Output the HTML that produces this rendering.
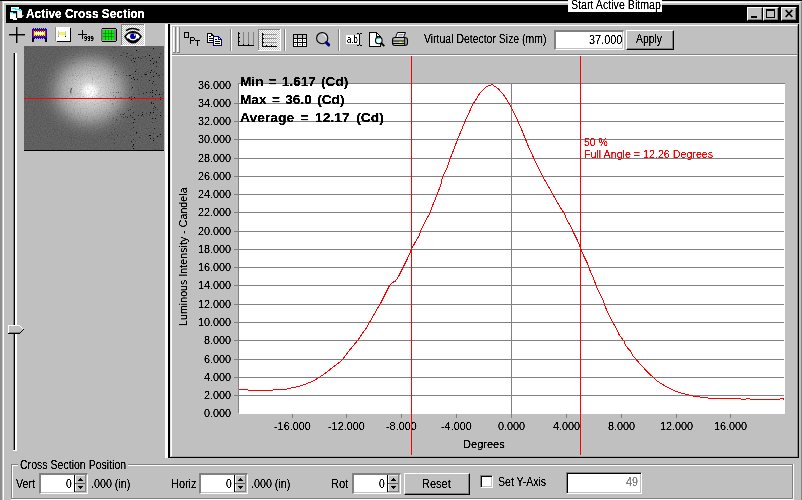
<!DOCTYPE html>
<html><head><meta charset="utf-8"><title>Active Cross Section</title>
<style>
html,body{margin:0;padding:0;}
body{width:802px;height:500px;overflow:hidden;background:#c0c0c0;position:relative;font-family:"Liberation Sans",sans-serif;font-size:12px;color:#000;line-height:1;}
.a{position:absolute;display:block;}
.t,.tb{position:absolute;white-space:pre;transform-origin:0 0;filter:url(#crisp);}
.tb{filter:url(#crispb);}
.btn{position:absolute;background:#c0c0c0;box-sizing:border-box;border:1px solid;border-color:#fff #000 #000 #fff;box-shadow:inset -1px -1px 0 #808080;}
.sunk{position:absolute;background:#fff;box-sizing:border-box;border:1px solid;border-color:#808080 #fff #fff #808080;box-shadow:inset 1px 1px 0 #000, inset -1px -1px 0 #c0c0c0;}
svg{position:absolute;overflow:visible;}
</style></head><body>
<svg width="0" height="0" style="left:0;top:0"><defs>
<filter id="crisp" x="-5%" y="-5%" width="110%" height="110%" color-interpolation-filters="sRGB"><feComponentTransfer><feFuncA type="linear" slope="3" intercept="-0.72"/></feComponentTransfer></filter>
<filter id="crispb" x="-5%" y="-5%" width="110%" height="110%" color-interpolation-filters="sRGB"><feComponentTransfer><feFuncA type="linear" slope="3" intercept="-0.62"/></feComponentTransfer></filter>
<pattern id="dz" width="2" height="2" patternUnits="userSpaceOnUse"><rect width="2" height="2" fill="#c0c0c0"/><rect width="1" height="1" fill="#fff"/><rect x="1" y="1" width="1" height="1" fill="#fff"/></pattern>
</defs></svg>

<div class="a" style="left:0px;top:0px;width:802px;height:1px;background:#000;"></div>
<div class="a" style="left:0px;top:1px;width:2px;height:499px;background:#8c8c8c;"></div>
<div class="a" style="left:2px;top:1px;width:799px;height:1px;background:#dfdfdf;"></div>
<div class="a" style="left:2px;top:2px;width:1px;height:498px;background:#c8c8c8;"></div>
<div class="a" style="left:3px;top:2px;width:797px;height:1px;background:#fff;"></div>
<div class="a" style="left:3px;top:2px;width:1px;height:498px;background:#fff;"></div>
<div class="a" style="left:801px;top:2px;width:1px;height:498px;background:#868686;"></div>
<div class="a" style="left:6px;top:5px;width:793px;height:18px;background:#000;"></div>
<div class="tb" style="left:25.7px;top:6px;font-size:12px;line-height:16px;height:16px;font-weight:bold;color:#fff;transform:scaleX(0.9890)">Active Cross Section</div>
<svg style="left:8px;top:6px" width="16" height="16" viewBox="0 0 16 16" shape-rendering="crispEdges">
<rect x="3" y="1" width="8" height="4" fill="#fff"/><rect x="9" y="3" width="4" height="2" fill="#fff"/>
<rect x="4" y="2" width="4" height="1" fill="#0ff"/><rect x="7" y="3" width="5" height="1" fill="#0ff"/><rect x="11" y="4" width="3" height="1" fill="#0ff"/>
<rect x="9" y="5" width="5" height="7" fill="#f4f4f4"/><rect x="9" y="5" width="1" height="7" fill="#d0d0d0"/><rect x="14" y="9" width="1" height="2" fill="#b0b0b0"/><rect x="15" y="9" width="1" height="1" fill="#808080"/>
<rect x="2" y="6" width="3" height="1" fill="#0ff"/><rect x="5" y="7" width="3" height="1" fill="#0ff"/>
<rect x="2" y="8" width="6" height="5" fill="#fff"/><rect x="2" y="7" width="3" height="1" fill="#fff"/><rect x="5" y="12" width="4" height="2" fill="#fff"/>
</svg>
<div class="btn" style="left:747px;top:7px;width:16px;height:14px"></div>
<div class="btn" style="left:763px;top:7px;width:16px;height:14px"></div>
<div class="btn" style="left:781px;top:7px;width:16px;height:14px"></div>
<div class="a" style="left:751px;top:16px;width:6px;height:2px;background:#000;"></div>
<div class="a" style="left:766px;top:9px;width:9px;height:9px;box-sizing:border-box;border:1px solid #000;border-top-width:2px"></div>
<svg style="left:785px;top:10px" width="8" height="7" viewBox="0 0 8 7"><path d="M0.7 0 L7.3 7 M7.3 0 L0.7 7" stroke="#000" stroke-width="1.7" fill="none"/></svg>
<div class="a" style="left:568px;top:0px;width:94px;height:12px;background:#fff;"></div>
<div class="t" style="left:570.52px;top:-3px;font-size:12.5px;line-height:16px;height:16px;transform:scaleX(0.8514)">Start Active Bitmap</div>
<div class="a" style="left:9px;top:34px;width:16px;height:1px;background:#000;"></div>
<div class="a" style="left:16px;top:27px;width:1px;height:16px;background:#000;"></div>
<div class="a" style="left:9px;top:35px;width:16px;height:1px;background:#000;opacity:.45"></div>
<div class="a" style="left:17px;top:27px;width:1px;height:16px;background:#000;opacity:.45"></div>
<svg style="left:32px;top:28px" width="15" height="14" viewBox="0 0 15 14" shape-rendering="crispEdges">
<rect x="0" y="1" width="15" height="9" fill="#0000ff"/>
<g fill="#0000ff"><rect x="1" y="0" width="1" height="1"/><rect x="3" y="0" width="1" height="1"/><rect x="5" y="0" width="1" height="1"/><rect x="7" y="0" width="1" height="1"/><rect x="9" y="0" width="1" height="1"/><rect x="11" y="0" width="1" height="1"/><rect x="13" y="0" width="1" height="1"/>
<rect x="2" y="10" width="1" height="1"/><rect x="4" y="10" width="1" height="1"/><rect x="6" y="10" width="1" height="1"/><rect x="8" y="10" width="1" height="1"/><rect x="10" y="10" width="1" height="1"/><rect x="12" y="10" width="1" height="1"/></g>
<rect x="1" y="2" width="13" height="7" fill="#ff0000"/>
<rect x="2" y="3" width="11" height="5" fill="#ffff00"/>
<rect x="3" y="5" width="9" height="1" fill="#ffffff"/>
<g fill="#ffffff"><rect x="4" y="4" width="1" height="3"/><rect x="6" y="4" width="1" height="3"/><rect x="8" y="4" width="1" height="3"/><rect x="10" y="4" width="1" height="3"/></g>
<g fill="#ff0000"><rect x="3" y="3" width="1" height="1"/><rect x="5" y="3" width="1" height="1"/><rect x="7" y="3" width="1" height="1"/><rect x="9" y="3" width="1" height="1"/><rect x="11" y="3" width="1" height="1"/>
<rect x="3" y="7" width="1" height="1"/><rect x="5" y="7" width="1" height="1"/><rect x="7" y="7" width="1" height="1"/><rect x="9" y="7" width="1" height="1"/><rect x="11" y="7" width="1" height="1"/></g>
<g fill="#0000ff"><rect x="2" y="2" width="1" height="1"/><rect x="4" y="2" width="1" height="1"/><rect x="6" y="2" width="1" height="1"/><rect x="8" y="2" width="1" height="1"/><rect x="10" y="2" width="1" height="1"/><rect x="12" y="2" width="1" height="1"/>
<rect x="2" y="8" width="1" height="1"/><rect x="4" y="8" width="1" height="1"/><rect x="6" y="8" width="1" height="1"/><rect x="8" y="8" width="1" height="1"/><rect x="10" y="8" width="1" height="1"/><rect x="12" y="8" width="1" height="1"/></g>
<rect x="0" y="10" width="2" height="4" fill="#000"/><rect x="13" y="10" width="2" height="4" fill="#000"/>
</svg>
<div class="a" style="left:56px;top:27px;width:14px;height:14px;background:#fff;box-shadow:1px 1px 0 #000"></div>
<div class="a" style="left:55px;top:27px;width:1px;height:14px;background:#909090;"></div>
<div class="a" style="left:59px;top:32px;width:6px;height:3px;background:#f4f460;"></div>
<div class="a" style="left:58px;top:31px;width:1px;height:6px;background:#c8c8c8;"></div>
<div class="a" style="left:65px;top:31px;width:1px;height:6px;background:#c8c8c8;"></div>
<div class="a" style="left:58px;top:36px;width:1px;height:1px;background:#808080;"></div>
<div class="a" style="left:65px;top:36px;width:1px;height:1px;background:#000;"></div>
<div class="a" style="left:78px;top:34px;width:9px;height:1px;background:#000;"></div>
<div class="a" style="left:82px;top:30px;width:1px;height:9px;background:#000;"></div>
<div class="t" style="left:83.8px;top:33px;font-size:7px;line-height:11px;height:11px;font-weight:bold;transform:scaleX(0.8227)">999</div>
<svg style="left:101px;top:28px" width="16" height="14" viewBox="0 0 16 14" shape-rendering="crispEdges">
<rect x="0" y="0" width="16" height="14" fill="#808080"/>
<rect x="1" y="0" width="14" height="1" fill="#000"/><rect x="1" y="13" width="14" height="1" fill="#000"/><rect x="15" y="1" width="1" height="12" fill="#000"/><rect x="0" y="1" width="1" height="12" fill="#606060"/>
<rect x="0" y="0" width="1" height="1" fill="#c0c0c0"/><rect x="15" y="0" width="1" height="1" fill="#c0c0c0"/><rect x="0" y="13" width="1" height="1" fill="#c0c0c0"/><rect x="15" y="13" width="1" height="1" fill="#c0c0c0"/>
<rect x="1" y="1" width="14" height="1" fill="#a8a8a8"/><rect x="1" y="12" width="14" height="1" fill="#a8a8a8"/>
<rect x="2" y="2" width="11" height="10" fill="#005000"/>
<g fill="#00f000"><rect x="2" y="2" width="2" height="3"/><rect x="5" y="2" width="2" height="3"/><rect x="8" y="2" width="2" height="3"/><rect x="11" y="2" width="2" height="3"/>
<rect x="2" y="6" width="2" height="2"/><rect x="5" y="6" width="2" height="2"/><rect x="8" y="6" width="2" height="2"/><rect x="11" y="6" width="2" height="2"/>
<rect x="2" y="9" width="2" height="3"/><rect x="5" y="9" width="2" height="3"/><rect x="8" y="9" width="2" height="3"/><rect x="11" y="9" width="2" height="3"/></g>
<g fill="#00a000"><rect x="4" y="2" width="1" height="3"/><rect x="7" y="2" width="1" height="3"/><rect x="10" y="2" width="1" height="3"/>
<rect x="4" y="6" width="1" height="2"/><rect x="7" y="6" width="1" height="2"/><rect x="10" y="6" width="1" height="2"/>
<rect x="4" y="9" width="1" height="3"/><rect x="7" y="9" width="1" height="3"/><rect x="10" y="9" width="1" height="3"/>
<rect x="2" y="5" width="2" height="1"/><rect x="5" y="5" width="2" height="1"/><rect x="8" y="5" width="2" height="1"/><rect x="11" y="5" width="2" height="1"/>
<rect x="2" y="8" width="2" height="1"/><rect x="5" y="8" width="2" height="1"/><rect x="8" y="8" width="2" height="1"/><rect x="11" y="8" width="2" height="1"/></g>
</svg>
<svg style="left:121px;top:24px" width="24" height="22" viewBox="0 0 24 22" shape-rendering="crispEdges">
<rect x="0" y="0" width="24" height="22" fill="#fff"/><rect x="0" y="0" width="23" height="21" fill="#808080"/><rect x="1" y="1" width="22" height="20" fill="url(#dz)"/>
</svg>
<svg style="left:124px;top:27px" width="18" height="17" viewBox="0 0 18 17">
<path d="M2 3.6 Q8 -0.6 15.5 3.4" stroke="#000" stroke-width="1.5" fill="none"/>
<path d="M1 9.5 Q4.5 4.8 9 4.8 Q13.5 4.8 17 9.5 Q13 15.8 9 15.8 Q5 15.8 1 9.5 Z" fill="#fff" stroke="#000" stroke-width="1.6"/>
<path d="M3.5 12 Q9 17.5 14.5 12" stroke="#000" stroke-width="2.2" fill="none"/>
<circle cx="9" cy="9.2" r="2.9" fill="#0000a0"/><rect x="10" y="7.2" width="1.2" height="1.6" fill="#fff"/>
<path d="M5 6.3 Q9 4.6 13 6.3" stroke="#000" stroke-width="1" fill="none"/>
</svg>
<div class="a" style="left:13px;top:53px;width:1px;height:398px;background:#808080;"></div>
<div class="a" style="left:14px;top:53px;width:1px;height:398px;background:#000;"></div>
<div class="a" style="left:15px;top:53px;width:2px;height:398px;background:#fff;"></div>
<div class="a" style="left:13px;top:450px;width:4px;height:1px;background:#fff;"></div>
<svg style="left:8px;top:325px" width="17" height="9" viewBox="0 0 17 9" shape-rendering="crispEdges">
<path d="M0 0 H12 L16 4.5 L12 9 H0 Z" fill="#c0c0c0"/>
<rect x="0" y="0" width="12" height="1" fill="#fff"/><rect x="0" y="0" width="1" height="8" fill="#fff"/>
<rect x="12" y="1" width="1" height="1" fill="#fff"/><rect x="13" y="2" width="1" height="1" fill="#fff"/><rect x="14" y="3" width="1" height="1" fill="#fff"/>
<rect x="0" y="8" width="12" height="1" fill="#000"/><rect x="12" y="7" width="1" height="1" fill="#000"/><rect x="13" y="6" width="1" height="1" fill="#000"/><rect x="14" y="5" width="1" height="1" fill="#000"/><rect x="15" y="4" width="1" height="1" fill="#000"/>
<rect x="1" y="7" width="11" height="1" fill="#808080"/>
</svg>
<svg style="left:24px;top:46px" width="140" height="105" viewBox="0 0 140 105">
<defs>
<radialGradient id="bg" cx="66" cy="45" r="50" gradientUnits="userSpaceOnUse" gradientTransform="translate(66 45) scale(1.04 0.97) translate(-66 -45)">
<stop offset="0" stop-color="#ffffff"/><stop offset="0.09" stop-color="#fdfdfd"/><stop offset="0.14" stop-color="#e8e8e8"/><stop offset="0.2" stop-color="#d4d4d4"/><stop offset="0.3" stop-color="#c8c8c8"/>
<stop offset="0.4" stop-color="#bbbbbb"/><stop offset="0.5" stop-color="#acacac"/><stop offset="0.6" stop-color="#989898"/><stop offset="0.7" stop-color="#808080"/><stop offset="0.8" stop-color="#6e6e6e"/><stop offset="0.9" stop-color="#646464"/><stop offset="1" stop-color="#606060"/>
</radialGradient>
<filter id="nzd" x="0" y="0" width="100%" height="100%"><feTurbulence type="fractalNoise" baseFrequency="0.85" numOctaves="1" seed="3"/>
<feColorMatrix type="matrix" values="0 0 0 0 0  0 0 0 0 0  0 0 0 0 0  2.2 0 0 0 -0.95"/></filter>
<filter id="nzl" x="0" y="0" width="100%" height="100%"><feTurbulence type="fractalNoise" baseFrequency="0.85" numOctaves="1" seed="11"/>
<feColorMatrix type="matrix" values="0 0 0 0 1  0 0 0 0 1  0 0 0 0 1  0 2.2 0 0 -0.95"/></filter>
<filter id="spk" x="0" y="0" width="100%" height="100%"><feTurbulence type="fractalNoise" baseFrequency="0.95" numOctaves="1" seed="29"/>
<feColorMatrix type="matrix" values="0 0 0 0 0  0 0 0 0 0  0 0 0 0 0  0 0 16 0 -10.9"/></filter>
<linearGradient id="spm" x1="0" x2="1" y1="0" y2="0"><stop offset="0" stop-color="#fff" stop-opacity="0.1"/><stop offset="0.6" stop-color="#fff" stop-opacity="0.15"/><stop offset="0.8" stop-color="#fff" stop-opacity="1"/><stop offset="1" stop-color="#fff" stop-opacity="1"/></linearGradient>
<mask id="spmk"><rect width="140" height="105" fill="url(#spm)"/></mask>
</defs>
<rect width="140" height="105" fill="#606060"/>
<rect width="140" height="105" fill="url(#bg)"/>
<rect width="140" height="105" filter="url(#nzd)" opacity="0.17"/>
<rect width="140" height="105" filter="url(#nzl)" opacity="0.09"/>
<g mask="url(#spmk)"><rect width="140" height="105" filter="url(#spk)"/></g>
<path d="M47 47.5 q-1.2 -2 0.8 -5.5" stroke="#585858" stroke-width="1.1" fill="none"/>
<rect x="0" y="104" width="140" height="1" fill="#000"/>
<rect x="0" y="52" width="140" height="1" fill="#ff0000"/>
</svg>
<div class="a" style="left:165px;top:24px;width:3px;height:434px;background:#fff;"></div>
<div class="a" style="left:168px;top:24px;width:2px;height:434px;background:#000;"></div>
<div class="a" style="left:170px;top:25px;width:1px;height:432px;background:#e4e4e4;"></div>
<div class="a" style="left:171px;top:25px;width:1px;height:431px;background:#fff;"></div>
<div class="a" style="left:171px;top:25px;width:626px;height:1px;background:#fff;"></div>
<div class="a" style="left:798px;top:24px;width:1px;height:434px;background:#000;"></div>
<div class="a" style="left:797px;top:26px;width:1px;height:431px;background:#8c8c8c;"></div>
<div class="a" style="left:168px;top:457px;width:631px;height:1px;background:#000;"></div>
<div class="a" style="left:172px;top:456px;width:625px;height:1px;background:#a4a4a4;"></div>
<div class="a" style="left:172px;top:54px;width:625px;height:1px;background:#808080;"></div>
<div class="a" style="left:171px;top:55px;width:626px;height:1px;background:#fff;"></div>
<div class="a" style="left:173px;top:27px;width:1px;height:25px;background:#fff;"></div>
<div class="a" style="left:174px;top:27px;width:1px;height:25px;background:#e0e0e0;"></div>
<div class="a" style="left:175px;top:27px;width:1px;height:26px;background:#808080;"></div>
<div class="a" style="left:173px;top:52px;width:3px;height:1px;background:#808080;"></div>
<div class="a" style="left:177px;top:27px;width:1px;height:25px;background:#fff;"></div>
<div class="a" style="left:178px;top:27px;width:1px;height:25px;background:#e0e0e0;"></div>
<div class="a" style="left:179px;top:27px;width:1px;height:26px;background:#808080;"></div>
<div class="a" style="left:177px;top:52px;width:3px;height:1px;background:#808080;"></div>
<div class="a" style="left:230px;top:29px;width:1px;height:22px;background:#808080;"></div>
<div class="a" style="left:231px;top:29px;width:1px;height:22px;background:#fff;"></div>
<div class="a" style="left:284px;top:29px;width:1px;height:22px;background:#808080;"></div>
<div class="a" style="left:285px;top:29px;width:1px;height:22px;background:#fff;"></div>
<div class="a" style="left:338px;top:29px;width:1px;height:22px;background:#808080;"></div>
<div class="a" style="left:339px;top:29px;width:1px;height:22px;background:#fff;"></div>
<svg style="left:184px;top:32px" width="16" height="14" viewBox="0 0 16 14" shape-rendering="crispEdges">
<rect x="0.5" y="0.5" width="4" height="5" fill="none" stroke="#000"/>
<path d="M6.5 5 V12 M6 5.5 H10 M10.5 6 V8 M6 8.5 H10" fill="none" stroke="#000"/>
<path d="M11 8.5 H16 M13.5 8 V14" fill="none" stroke="#000"/>
</svg>
<svg style="left:207px;top:33px" width="15" height="13" viewBox="0 0 15 13" shape-rendering="crispEdges">
<path d="M0.5 0.5 H4.5 L6.5 2.5 V9.5 H0.5 Z" fill="#fff" stroke="#000"/>
<path d="M4.5 0.5 V2.5 H6.5" fill="none" stroke="#000"/>
<path d="M2 3.5 H4 M2 5.5 H6 M2 7.5 H6" stroke="#000"/>
<path d="M6.5 3.5 H11.5 L14.5 6.5 V12.5 H6.5 Z" fill="#fff" stroke="#000080"/>
<path d="M11.5 3.5 V6.5 H14.5" fill="none" stroke="#000080"/>
<path d="M8 6.5 H10 M8 8.5 H13 M8 10.5 H13" stroke="#000"/>
</svg>
<svg style="left:238px;top:32px" width="16" height="14" viewBox="0 0 16 14" shape-rendering="crispEdges">
<path d="M5.5 0 V13 M10.5 0 V13 M15.5 0 V13" stroke="#808080"/>
<path d="M0.5 0 V13.5 H16" fill="none" stroke="#000"/>
<path d="M1 1.5 H2 M1 5.5 H2 M1 9.5 H2 M5.5 12 V13 M10.5 12 V13" stroke="#000"/>
</svg>
<svg style="left:258px;top:29px" width="23" height="22" viewBox="0 0 23 22" shape-rendering="crispEdges">
<rect x="0" y="0" width="23" height="22" fill="#fff"/><rect x="0" y="0" width="22" height="21" fill="#808080"/><rect x="1" y="1" width="21" height="20" fill="url(#dz)"/>
<path d="M5 5.5 H19 M5 9.5 H19 M5 13.5 H19" stroke="#989898"/>
<path d="M4.5 4 V17.5 H19" fill="none" stroke="#000"/>
<path d="M5 5.5 H6 M5 9.5 H6 M5 13.5 H6 M8.5 16 V17 M13.5 16 V17" stroke="#000"/>
</svg>
<svg style="left:293px;top:34px" width="14" height="13" viewBox="0 0 14 13" shape-rendering="crispEdges">
<rect x="0" y="0" width="14" height="13" fill="#000"/>
<g fill="#c0c0c0"><rect x="1" y="1" width="3" height="3"/><rect x="5" y="1" width="4" height="3"/><rect x="10" y="1" width="3" height="3"/></g>
<g fill="#fff"><rect x="1" y="5" width="3" height="3"/><rect x="5" y="5" width="4" height="3"/><rect x="10" y="5" width="3" height="3"/>
<rect x="1" y="9" width="3" height="3"/><rect x="5" y="9" width="4" height="3"/><rect x="10" y="9" width="3" height="3"/></g>
<g fill="#909090"><rect x="2" y="6" width="1" height="1"/><rect x="6" y="6" width="2" height="1"/><rect x="11" y="6" width="1" height="1"/><rect x="2" y="10" width="1" height="1"/><rect x="6" y="10" width="2" height="1"/><rect x="11" y="10" width="1" height="1"/></g>
</svg>
<svg style="left:316px;top:32px" width="16" height="16" viewBox="0 0 16 16">
<circle cx="6.2" cy="6.2" r="5.6" fill="none" stroke="#000" stroke-width="1.1"/>
<path d="M6.5 2 Q9.5 2.2 10.3 5.5" stroke="#fff" stroke-width="1" fill="none"/>
<path d="M10.4 10.6 L12.7 12.9" stroke="#000080" stroke-width="2.9" stroke-linecap="round"/>
</svg>
<svg style="left:346px;top:33px" width="16" height="13" viewBox="0 0 16 13" shape-rendering="crispEdges">
<rect x="0" y="2" width="13" height="9" fill="#fff"/>
<path d="M11 0.5 H13 M14 0.5 H16 M13.5 1 V12 M11 12.5 H13 M14 12.5 H16" stroke="#000" fill="none"/>
</svg>
<div class="t" style="left:346.87px;top:33px;font-size:10px;line-height:14px;height:14px;transform:scaleX(0.7648)">a.b</div>
<svg style="left:369px;top:32px" width="17" height="15" viewBox="0 0 17 15">
<path d="M0.5 0.5 H7.5 L11.5 4.5 V14.5 H0.5 Z" fill="#fff" stroke="#000" shape-rendering="crispEdges"/>
<path d="M7.5 0.5 V4.5 H11.5" fill="none" stroke="#000" shape-rendering="crispEdges"/>
<circle cx="9.8" cy="8.4" r="3.3" fill="#e8ffff" stroke="#000" stroke-width="1.1"/>
<path d="M8.3 7 q1 -1.3 2.4 -0.6" stroke="#00e0e0" stroke-width="1.1" fill="none"/>
<path d="M12.2 11 L15.3 14.2" stroke="#000" stroke-width="1.9"/>
</svg>
<svg style="left:392px;top:32px" width="17" height="14" viewBox="0 0 17 14">
<path d="M3.5 5.5 L5.5 0.5 H13.5 L11.5 5.5 Z" fill="#fff" stroke="#000" stroke-width="1"/>
<path d="M6.5 2.5 H11.5 M6 4 H10.5" stroke="#808080" stroke-width="0.8"/>
<path d="M0.5 8 Q0.5 5.5 3 5.5 H12.5 Q15.5 5.5 15.5 8 V11 Q15.5 13.5 12.5 13.5 H3 Q0.5 13.5 0.5 11 Z" fill="#c0c0c0" stroke="#000" stroke-width="1.1"/>
<path d="M1 9 H12.5 M1 11.5 H12.5" stroke="#000" stroke-width="1"/><rect x="7" y="9.8" width="3" height="1.2" fill="#ffff00"/>
<path d="M12.7 6 V13" stroke="#000" stroke-width="1"/><path d="M14 7.5 V12" stroke="#606060" stroke-width="1" stroke-dasharray="1 1"/>
</svg>
<div class="t" style="left:424.15px;top:31px;font-size:12.5px;line-height:16px;height:16px;transform:scaleX(0.8371)">Virtual Detector Size (mm)</div>
<div class="a" style="left:554px;top:30px;width:70px;height:20px;box-sizing:border-box;background:#fff;border-style:solid;border-width:2px 1px 1px 2px;border-color:#808080 #fff #fff #808080;box-shadow:inset -1px -1px 0 #c0c0c0"></div>
<div class="t" style="left:588.59px;top:32px;font-size:12.5px;line-height:16px;height:16px;transform:scaleX(0.8718)">37.000</div>
<div class="btn" style="left:626px;top:30px;width:48px;height:20px"></div>
<div class="t" style="left:636.37px;top:31px;font-size:12.5px;line-height:16px;height:16px;transform:scaleX(0.8328)">Apply</div>
<svg style="left:0;top:0" width="802" height="500" viewBox="0 0 802 500">
<g shape-rendering="crispEdges">
<rect x="239" y="84" width="546" height="330" fill="#fff"/>
<rect x="238" y="83" width="1" height="330" fill="#808080"/>
<rect x="238" y="83" width="547" height="1" fill="#808080"/>
<rect x="234" y="395" width="550" height="1" fill="#808080"/>
<rect x="234" y="377" width="550" height="1" fill="#808080"/>
<rect x="234" y="359" width="550" height="1" fill="#808080"/>
<rect x="234" y="340" width="550" height="1" fill="#808080"/>
<rect x="234" y="322" width="550" height="1" fill="#808080"/>
<rect x="234" y="304" width="550" height="1" fill="#808080"/>
<rect x="234" y="285" width="550" height="1" fill="#808080"/>
<rect x="234" y="267" width="550" height="1" fill="#808080"/>
<rect x="234" y="249" width="550" height="1" fill="#808080"/>
<rect x="234" y="231" width="550" height="1" fill="#808080"/>
<rect x="234" y="212" width="550" height="1" fill="#808080"/>
<rect x="234" y="194" width="550" height="1" fill="#808080"/>
<rect x="234" y="176" width="550" height="1" fill="#808080"/>
<rect x="234" y="158" width="550" height="1" fill="#808080"/>
<rect x="234" y="139" width="550" height="1" fill="#808080"/>
<rect x="234" y="121" width="550" height="1" fill="#808080"/>
<rect x="234" y="103" width="550" height="1" fill="#808080"/>
<rect x="511" y="84" width="1" height="330" fill="#808080"/>
<rect x="292" y="414" width="1" height="4" fill="#808080"/>
<rect x="346" y="414" width="1" height="4" fill="#808080"/>
<rect x="401" y="414" width="1" height="4" fill="#808080"/>
<rect x="456" y="414" width="1" height="4" fill="#808080"/>
<rect x="511" y="414" width="1" height="4" fill="#808080"/>
<rect x="566" y="414" width="1" height="4" fill="#808080"/>
<rect x="621" y="414" width="1" height="4" fill="#808080"/>
<rect x="676" y="414" width="1" height="4" fill="#808080"/>
<rect x="730" y="414" width="1" height="4" fill="#808080"/>
</g>
<polyline points="239.0,389.0 244.0,389.6 250.0,390.2 262.0,390.5 270.0,390.4 275.6,389.6 286.8,389.0 292.4,387.8 298.0,386.6 305.0,384.3 312.0,381.5 319.0,377.6 326.0,372.7 333.0,367.1 340.0,362.0 343.0,358.9 348.4,351.6 354.0,344.7 358.2,339.8 362.4,333.5 366.0,328.5 370.0,321.5 376.0,311.0 380.5,303.5 385.0,294.5 389.5,285.5 391.6,283.1 395.5,281.0 398.5,276.5 403.0,267.5 407.5,258.5 411.5,249.3 415.0,242.5 419.0,236.0 420.5,231.0 426.0,220.0 430.0,213.0 433.0,204.5 437.0,195.0 441.0,184.0 442.5,177.0 447.0,168.0 450.0,159.0 453.6,150.0 457.5,139.5 465.0,121.5 472.5,105.0 480.0,93.0 486.0,87.0 492.0,84.5 498.0,88.5 504.0,95.4 510.0,105.0 516.0,117.0 522.0,130.5 528.0,145.5 535.5,162.0 543.0,177.0 551.0,191.0 556.0,200.0 560.0,207.0 564.2,213.3 567.0,220.3 570.5,225.9 574.0,233.6 577.5,240.6 580.6,248.3 583.8,256.0 587.3,263.0 590.0,270.5 593.5,278.4 596.3,286.1 599.8,293.8 603.3,300.8 604.5,305.0 607.5,312.0 611.0,319.0 614.5,325.3 617.3,330.2 619.2,335.0 624.1,341.3 625.5,345.5 630.4,351.1 633.2,356.0 637.4,360.9 643.0,367.2 647.9,372.5 652.8,377.0 657.0,380.9 664.0,385.4 671.0,389.2 678.0,392.1 685.0,394.1 693.4,396.0 701.8,397.3 711.6,398.4 725.0,398.6 740.0,398.9 745.0,399.3 747.0,398.6 750.0,399.0 760.0,399.0 772.0,399.0 780.0,399.0 782.0,398.2 784.0,399.2" fill="none" stroke="#ff0000" stroke-width="1" stroke-linejoin="round" shape-rendering="crispEdges"/>
</svg>
<div class="t" style="left:204.02px;top:406px;font-size:11px;line-height:15px;height:15px;transform:scaleX(0.9841)">0.000</div>
<div class="t" style="left:204.02px;top:388px;font-size:11px;line-height:15px;height:15px;transform:scaleX(0.9841)">2.000</div>
<div class="t" style="left:204.02px;top:370px;font-size:11px;line-height:15px;height:15px;transform:scaleX(0.9841)">4.000</div>
<div class="t" style="left:204.02px;top:352px;font-size:11px;line-height:15px;height:15px;transform:scaleX(0.9841)">6.000</div>
<div class="t" style="left:204.02px;top:333px;font-size:11px;line-height:15px;height:15px;transform:scaleX(0.9841)">8.000</div>
<div class="t" style="left:198.01px;top:315px;font-size:11px;line-height:15px;height:15px;transform:scaleX(0.9841)">10.000</div>
<div class="t" style="left:198.01px;top:297px;font-size:11px;line-height:15px;height:15px;transform:scaleX(0.9841)">12.000</div>
<div class="t" style="left:198.01px;top:278px;font-size:11px;line-height:15px;height:15px;transform:scaleX(0.9841)">14.000</div>
<div class="t" style="left:198.01px;top:260px;font-size:11px;line-height:15px;height:15px;transform:scaleX(0.9841)">16.000</div>
<div class="t" style="left:198.01px;top:242px;font-size:11px;line-height:15px;height:15px;transform:scaleX(0.9841)">18.000</div>
<div class="t" style="left:198.01px;top:224px;font-size:11px;line-height:15px;height:15px;transform:scaleX(0.9841)">20.000</div>
<div class="t" style="left:198.01px;top:205px;font-size:11px;line-height:15px;height:15px;transform:scaleX(0.9841)">22.000</div>
<div class="t" style="left:198.01px;top:187px;font-size:11px;line-height:15px;height:15px;transform:scaleX(0.9841)">24.000</div>
<div class="t" style="left:198.01px;top:169px;font-size:11px;line-height:15px;height:15px;transform:scaleX(0.9841)">26.000</div>
<div class="t" style="left:198.01px;top:151px;font-size:11px;line-height:15px;height:15px;transform:scaleX(0.9841)">28.000</div>
<div class="t" style="left:198.01px;top:132px;font-size:11px;line-height:15px;height:15px;transform:scaleX(0.9841)">30.000</div>
<div class="t" style="left:198.01px;top:114px;font-size:11px;line-height:15px;height:15px;transform:scaleX(0.9841)">32.000</div>
<div class="t" style="left:198.01px;top:96px;font-size:11px;line-height:15px;height:15px;transform:scaleX(0.9841)">34.000</div>
<div class="t" style="left:198.01px;top:78px;font-size:11px;line-height:15px;height:15px;transform:scaleX(0.9841)">36.000</div>
<div class="t" style="left:274.41px;top:419px;font-size:11px;line-height:15px;height:15px;transform:scaleX(0.9841)">-16.000</div>
<div class="t" style="left:328.41px;top:419px;font-size:11px;line-height:15px;height:15px;transform:scaleX(0.9841)">-12.000</div>
<div class="t" style="left:386.42px;top:419px;font-size:11px;line-height:15px;height:15px;transform:scaleX(0.9841)">-8.000</div>
<div class="t" style="left:441.42px;top:419px;font-size:11px;line-height:15px;height:15px;transform:scaleX(0.9841)">-4.000</div>
<div class="t" style="left:498.24px;top:419px;font-size:11px;line-height:15px;height:15px;transform:scaleX(0.9841)">0.000</div>
<div class="t" style="left:553.34px;top:419px;font-size:11px;line-height:15px;height:15px;transform:scaleX(0.9841)">4.000</div>
<div class="t" style="left:608.23px;top:419px;font-size:11px;line-height:15px;height:15px;transform:scaleX(0.9841)">8.000</div>
<div class="t" style="left:660.05px;top:419px;font-size:11px;line-height:15px;height:15px;transform:scaleX(0.9841)">12.000</div>
<div class="t" style="left:714.05px;top:419px;font-size:11px;line-height:15px;height:15px;transform:scaleX(0.9841)">16.000</div>
<div class="t" style="left:462.79px;top:437px;font-size:11px;line-height:15px;height:15px;transform:scaleX(1.0053)">Degrees</div>
<div class="a" style="left:0;top:0;width:0;height:0;transform-origin:0 0;transform:translate(187px,325.2px) rotate(-90deg)"><div class="t" style="left:-0.88px;top:-11px;font-size:11px;line-height:15px;height:15px;transform:scaleX(0.9729)">Luminous Intensity - Candela</div></div>
<div class="tb" style="left:240.38px;top:74px;font-size:12.5px;line-height:16px;height:16px;font-weight:bold;word-spacing:1.29px;transform:scaleX(1.0900)">Min = 1.617 (Cd)</div>
<div class="tb" style="left:240.38px;top:92px;font-size:12.5px;line-height:16px;height:16px;font-weight:bold;word-spacing:1.48px;transform:scaleX(1.0900)">Max = 36.0 (Cd)</div>
<div class="tb" style="left:240.05px;top:110px;font-size:12.5px;line-height:16px;height:16px;font-weight:bold;word-spacing:2.25px;transform:scaleX(1.1100)">Average = 12.17 (Cd)</div>
<div class="t" style="left:583.98px;top:135px;font-size:11px;line-height:15px;height:15px;color:#ff0000;transform:scaleX(0.9452)">50 %</div>
<div class="t" style="left:583.62px;top:147px;font-size:11px;line-height:15px;height:15px;color:#ff0000;transform:scaleX(0.9710)">Full Angle = 12.26 Degrees</div>
<div class="a" style="left:411px;top:56px;width:1px;height:399px;background:#ff0000;"></div>
<div class="a" style="left:580px;top:56px;width:1px;height:399px;background:#ff0000;"></div>
<div class="a" style="left:11px;top:464px;width:782px;height:1px;background:#808080;"></div>
<div class="a" style="left:11px;top:464px;width:1px;height:35px;background:#808080;"></div>
<div class="a" style="left:792px;top:464px;width:1px;height:35px;background:#808080;"></div>
<div class="a" style="left:11px;top:498px;width:782px;height:1px;background:#808080;"></div>
<div class="a" style="left:12px;top:465px;width:780px;height:1px;background:#fff;"></div>
<div class="a" style="left:12px;top:465px;width:1px;height:33px;background:#fff;"></div>
<div class="a" style="left:793px;top:464px;width:1px;height:36px;background:#fff;"></div>
<div class="a" style="left:11px;top:499px;width:783px;height:1px;background:#fff;"></div>
<div class="a" style="left:18px;top:460px;width:110px;height:10px;background:#c0c0c0;"></div>
<div class="t" style="left:20.47px;top:457px;font-size:12.5px;line-height:16px;height:16px;transform:scaleX(0.8446)">Cross Section Position</div>
<div class="t" style="left:16.45px;top:476px;font-size:12.5px;line-height:16px;height:16px;transform:scaleX(0.8476)">Vert</div>
<div class="a" style="left:39px;top:473px;width:49px;height:21px;box-sizing:border-box;background:#fff;border-style:solid;border-width:2px 1px 1px 2px;border-color:#808080 #fff #fff #808080;box-shadow:inset -1px -1px 0 #c0c0c0"></div>
<div class="t" style="left:65.58px;top:476px;font-size:12.5px;line-height:16px;height:16px;transform:scaleX(0.8377)">0</div>
<div class="a" style="left:74px;top:475px;width:1px;height:17px;background:#000;"></div>
<div class="a" style="left:75px;top:475px;width:11px;height:17px;background:#c0c0c0;"></div>
<div class="a" style="left:75px;top:475px;width:1px;height:8px;background:#fff;"></div>
<div class="a" style="left:75px;top:475px;width:11px;height:1px;background:#e8e8e8;"></div>
<div class="a" style="left:75px;top:484px;width:1px;height:8px;background:#fff;"></div>
<div class="a" style="left:75px;top:483px;width:11px;height:1px;background:#606060;"></div>
<div class="a" style="left:85px;top:475px;width:1px;height:17px;background:#808080;"></div>
<div class="a" style="left:75px;top:491px;width:11px;height:1px;background:#808080;"></div>
<svg style="left:78px;top:478px" width="5" height="11" viewBox="0 0 5 11" shape-rendering="crispEdges"><path d="M2 0 h1 v1 h1 v1 h1 v1 h-5 v-1 h1 v-1 h1 z M0 8 h5 v1 h-1 v1 h-1 v1 h-1 v-1 h-1 v-1 h-1 z" fill="#000"/></svg>
<div class="t" style="left:91.31px;top:476px;font-size:12.5px;line-height:16px;height:16px;transform:scaleX(0.8586)">.000 (in)</div>
<div class="t" style="left:170.7px;top:476px;font-size:12.5px;line-height:16px;height:16px;transform:scaleX(0.8727)">Horiz</div>
<div class="a" style="left:199px;top:473px;width:49px;height:21px;box-sizing:border-box;background:#fff;border-style:solid;border-width:2px 1px 1px 2px;border-color:#808080 #fff #fff #808080;box-shadow:inset -1px -1px 0 #c0c0c0"></div>
<div class="t" style="left:225.58px;top:476px;font-size:12.5px;line-height:16px;height:16px;transform:scaleX(0.8377)">0</div>
<div class="a" style="left:234px;top:475px;width:1px;height:17px;background:#000;"></div>
<div class="a" style="left:235px;top:475px;width:11px;height:17px;background:#c0c0c0;"></div>
<div class="a" style="left:235px;top:475px;width:1px;height:8px;background:#fff;"></div>
<div class="a" style="left:235px;top:475px;width:11px;height:1px;background:#e8e8e8;"></div>
<div class="a" style="left:235px;top:484px;width:1px;height:8px;background:#fff;"></div>
<div class="a" style="left:235px;top:483px;width:11px;height:1px;background:#606060;"></div>
<div class="a" style="left:245px;top:475px;width:1px;height:17px;background:#808080;"></div>
<div class="a" style="left:235px;top:491px;width:11px;height:1px;background:#808080;"></div>
<svg style="left:238px;top:478px" width="5" height="11" viewBox="0 0 5 11" shape-rendering="crispEdges"><path d="M2 0 h1 v1 h1 v1 h1 v1 h-5 v-1 h1 v-1 h1 z M0 8 h5 v1 h-1 v1 h-1 v1 h-1 v-1 h-1 v-1 h-1 z" fill="#000"/></svg>
<div class="t" style="left:251.31px;top:476px;font-size:12.5px;line-height:16px;height:16px;transform:scaleX(0.8586)">.000 (in)</div>
<div class="t" style="left:330.68px;top:476px;font-size:12.5px;line-height:16px;height:16px;transform:scaleX(0.8956)">Rot</div>
<div class="a" style="left:352px;top:473px;width:49px;height:21px;box-sizing:border-box;background:#fff;border-style:solid;border-width:2px 1px 1px 2px;border-color:#808080 #fff #fff #808080;box-shadow:inset -1px -1px 0 #c0c0c0"></div>
<div class="t" style="left:378.58px;top:476px;font-size:12.5px;line-height:16px;height:16px;transform:scaleX(0.8377)">0</div>
<div class="a" style="left:387px;top:475px;width:1px;height:17px;background:#000;"></div>
<div class="a" style="left:388px;top:475px;width:11px;height:17px;background:#c0c0c0;"></div>
<div class="a" style="left:388px;top:475px;width:1px;height:8px;background:#fff;"></div>
<div class="a" style="left:388px;top:475px;width:11px;height:1px;background:#e8e8e8;"></div>
<div class="a" style="left:388px;top:484px;width:1px;height:8px;background:#fff;"></div>
<div class="a" style="left:388px;top:483px;width:11px;height:1px;background:#606060;"></div>
<div class="a" style="left:398px;top:475px;width:1px;height:17px;background:#808080;"></div>
<div class="a" style="left:388px;top:491px;width:11px;height:1px;background:#808080;"></div>
<svg style="left:391px;top:478px" width="5" height="11" viewBox="0 0 5 11" shape-rendering="crispEdges"><path d="M2 0 h1 v1 h1 v1 h1 v1 h-5 v-1 h1 v-1 h1 z M0 8 h5 v1 h-1 v1 h-1 v1 h-1 v-1 h-1 v-1 h-1 z" fill="#000"/></svg>
<div class="btn" style="left:404px;top:473px;width:66px;height:22px"></div>
<div class="t" style="left:421.89px;top:476px;font-size:12.5px;line-height:16px;height:16px;transform:scaleX(0.8785)">Reset</div>
<div class="sunk" style="left:480px;top:475px;width:13px;height:13px"></div>
<div class="t" style="left:498.22px;top:474px;font-size:12.5px;line-height:16px;height:16px;transform:scaleX(0.8451)">Set Y-Axis</div>
<div class="sunk" style="left:566px;top:472px;width:76px;height:22px"></div>
<div class="t" style="left:625.96px;top:474px;font-size:12.5px;line-height:16px;height:16px;color:#808080;transform:scaleX(0.8595)">49</div>
</body></html>
